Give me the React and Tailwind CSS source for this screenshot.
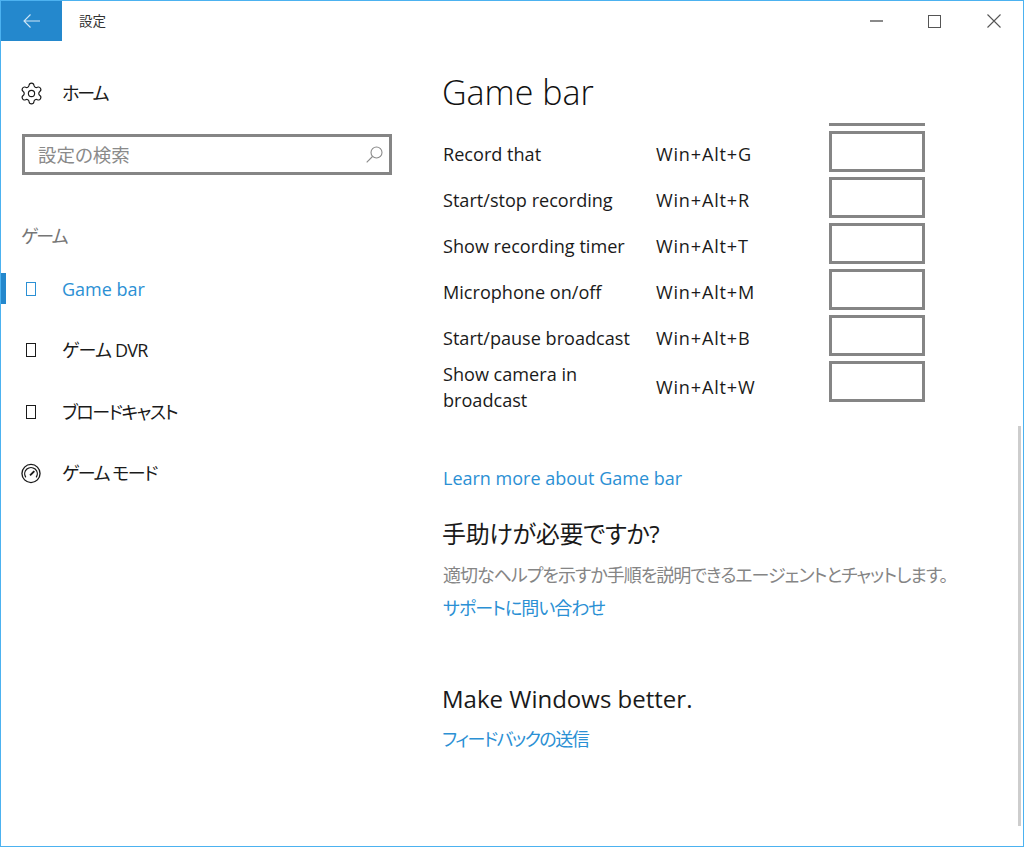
import React from 'react';
import { Settings } from 'lucide-react';

const shortcuts = [
  ['Record that', 'Win+Alt+G'],
  ['Start/stop recording', 'Win+Alt+R'],
  ['Show recording timer', 'Win+Alt+T'],
  ['Microphone on/off', 'Win+Alt+M'],
  ['Start/pause broadcast', 'Win+Alt+B'],
  ['Show camera in broadcast', 'Win+Alt+W'],
];

const Glyph = () => <div className="w-[10px] h-[14px] border-[1.5px] border-current" />;

const Gauge = () => (
  <svg width="21" height="21" viewBox="0 0 21 21" fill="none" stroke="currentColor" strokeWidth="1.4">
    <circle cx="10.5" cy="10.5" r="9.5" />
    <path d="M5 14.5a6.6 6.6 0 1 1 11 0" />
    <path d="M9.5 12.5 14 8" strokeWidth="2" />
  </svg>
);

const NavItem = ({ icon, label, active, tracking = '' }) => (
  <div className={`relative flex items-center h-[61.5px] pl-[20px] ${active ? 'text-[#2b90d4]' : 'text-[#1a1a1a]'}`}>
    {active && <div className="absolute left-0 top-[15px] w-[5px] h-[31px] bg-[#2488cd]" />}
    <div className="w-[20px] flex justify-center">{icon}</div>
    <span className={`ml-[21px] text-[18px] leading-6 ${tracking}`}>{label}</span>
  </div>
);

export default function App() {
  return (
    <div
      className="w-[1024px] h-[847px] bg-white border border-[#4cb2f0] flex flex-col overflow-hidden relative [font-feature-settings:'palt']"
      style={{ fontFamily: '"Open Sans", "Noto Sans CJK JP", sans-serif' }}
    >
      <header className="h-[40px] flex shrink-0">
        <div className="w-[61px] bg-[#2488cd] flex items-center justify-center text-[#cfe6f6]">
          <svg width="18" height="14" viewBox="0 0 18 14" fill="none" stroke="currentColor" strokeWidth="1.1">
            <path d="M1 7h16M7.5 .5 1 7l6.5 6.5" />
          </svg>
        </div>
        <div className="ml-[17px] flex items-center text-[13.5px] text-[#333]">設定</div>
        <div className="ml-auto flex items-center text-[#555]">
          <div className="w-[13px] h-[2px] bg-[#8a8a8a] mr-[45px]" />
          <div className="w-[13px] h-[13px] border-[1.5px] border-[#555] mr-[46px]" />
          <svg width="14" height="14" viewBox="0 0 14 14" fill="none" stroke="currentColor" strokeWidth="1.1" className="mr-[22px]">
            <path d="M.5 .5l13 13M13.5 .5l-13 13" />
          </svg>
        </div>
      </header>

      <div className="flex flex-1 min-h-0">
        <aside className="w-[441px] shrink-0">
          <div className="flex items-center h-[24px] mt-[40px] pl-[18px] text-[#1a1a1a]">
            <Settings size={25} strokeWidth={1.1} />
            <span className="ml-[18px] text-[18px] tracking-[-2px]">ホーム</span>
          </div>
          <div className="ml-[21px] mt-[29px] w-[370px] h-[41px] border-[3px] border-[#858585] flex items-center pl-[13px] pr-[6px] text-[#8a8a8a]">
            <span className="text-[18.5px]">設定の検索</span>
            <svg width="17" height="17" viewBox="0 0 17 17" fill="none" stroke="currentColor" strokeWidth="1.1" className="ml-auto">
              <circle cx="10.5" cy="6.5" r="5.5" />
              <path d="M6.5 10.5 .7 16.3" />
            </svg>
          </div>
          <div className="mt-[49px] ml-[20px] text-[18px] leading-6 text-[#767676] tracking-[-2px]">ゲーム</div>
          <div className="mt-[10px]">
            <NavItem active label="Game bar" icon={<Glyph />} />
            <NavItem label="ゲーム DVR" icon={<Glyph />} tracking="tracking-[-0.8px]" />
            <NavItem label="ブロードキャスト" icon={<Glyph />} tracking="tracking-[-1.5px]" />
            <NavItem label="ゲーム モード" icon={<Gauge />} tracking="tracking-[-1.5px]" />
          </div>
        </aside>

        <main className="flex-1 text-[#1a1a1a]">
          <h1 className="mt-[26px] text-[34px] leading-[50px] font-light text-[#111]">Game bar</h1>
          <div className="ml-[387px] mt-[6px] w-[96px] h-[3px] bg-[#858585]" />
          <div className="mt-[5px] flex flex-col">
            {shortcuts.map(([name, keys]) => (
              <div key={keys} className="flex items-center min-h-[46px] text-[18.1px] leading-[26px]">
                <div className="w-[214px] pl-[1px] pr-[20px]">{name}</div>
                <div className="w-[173px] tracking-[0.8px]">{keys}</div>
                <div className="w-[96px] h-[41px] self-start border-[3px] border-[#858585]" />
              </div>
            ))}
          </div>
          <a className="block mt-[53px] pl-[1px] text-[18px] leading-6 text-[#2b90d4]">Learn more about Game bar</a>
          <h2 className="mt-[28px] text-[24px] leading-8 text-[#1a1a1a] tracking-[-0.3px]">手助けが必要ですか?</h2>
          <p className="mt-[13px] pl-[1px] text-[18px] leading-6 text-[#858585] whitespace-nowrap tracking-[-1px]">適切なヘルプを示すか手順を説明できるエージェントとチャットします。</p>
          <a className="block mt-[9px] pl-[1px] text-[18px] leading-6 text-[#2b90d4] tracking-[-1px]">サポートに問い合わせ</a>
          <h2 className="mt-[63px] text-[24px] leading-8 text-[#1a1a1a]">Make Windows better.</h2>
          <a className="block mt-[12px] text-[18px] leading-6 text-[#2b90d4] tracking-[-1.5px]">フィードバックの送信</a>
        </main>
      </div>

      <div className="absolute right-[2px] top-[425px] h-[400px] w-[3px] bg-[#cdcdcd]" />
    </div>
  );
}
